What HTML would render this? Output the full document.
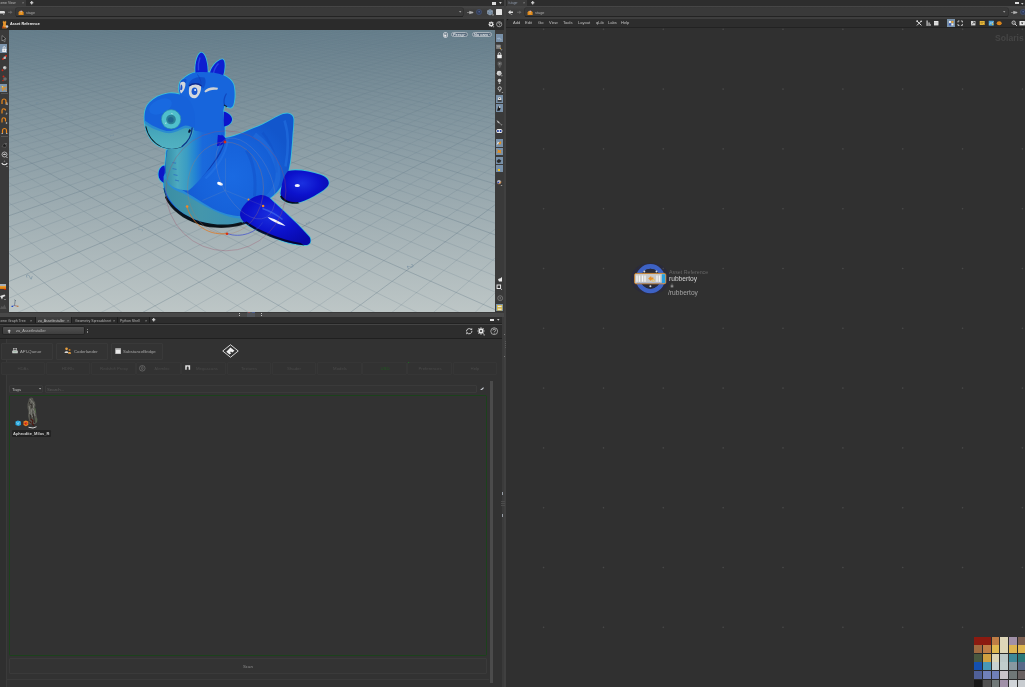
<!DOCTYPE html>
<html><head><meta charset="utf-8"><title>Houdini</title>
<style>
html,body{margin:0;padding:0;}
body{width:1025px;height:687px;overflow:hidden;background:#303030;position:relative;font-family:"Liberation Sans",sans-serif;color:#ccc;}
.a{position:absolute;}
.t{position:absolute;white-space:nowrap;line-height:1;will-change:transform;transform:scale(.1);transform-origin:0 0;}
svg{position:absolute;overflow:visible;}
</style></head><body>
<!-- divider -->
<div class="a" style="left:501.600px;top:0;width:2px;height:687px;background:#3b3b3b"></div><div class="a" style="left:503.500px;top:0;width:0.800px;height:687px;background:#353535"></div>
<div class="a" style="left:504.3px;top:0;width:1.8px;height:687px;background:#404040"></div>
<!-- ===== LEFT TOP PANE ===== -->
<div class="a" style="left:0;top:0;width:503.8px;height:5.5px;background:#2d2d2d"></div>
<div class="a" style="left:0;top:0;width:26px;height:5.8px;background:#3c3c3c"></div>
<div class="a" style="left:0;top:5.5px;width:503.8px;height:13px;background:linear-gradient(#474747,#3c3c3c 35%,#3b3b3b)"></div>
<div class="a" style="left:16px;top:8.2px;width:447px;height:7.4px;background:#393939;border-radius:1px;box-shadow:0 1.2px 0 #232323,0 -0.6px 0 #2c2c2c,-0.6px 0 0 #2c2c2c,0.6px 0 0 #2c2c2c"></div>
<div class="a" style="left:0;top:17.2px;width:503.8px;height:1.8px;background:#3e3e3e"></div>
<div class="a" style="left:0;top:19px;width:503.8px;height:10.6px;background:#2b2b2b"></div>
<!-- left toolbar -->
<div class="a" style="left:0;top:29.5px;width:8.6px;height:283px;background:#3a3a3a"></div>
<!-- right toolbar -->
<div class="a" style="left:494.6px;top:29.5px;width:9.2px;height:283px;background:#3a3a3a"></div>
<!-- viewport -->
<div class="a" id="vp" style="left:8.5px;top:29.5px;width:486.2px;height:282.5px;overflow:hidden;background:linear-gradient(#677f8c,#92a3aa 50%,#bdc6c6)">
<svg width="486.2" height="282.5" viewBox="0 0 486.2 282.5" style="left:0;top:0">
<defs><linearGradient id="gFade" x1="0" y1="0" x2="0" y2="1"><stop offset="0" stop-color="#fff" stop-opacity="0.3"/><stop offset="0.35" stop-color="#fff" stop-opacity="0.6"/><stop offset="0.7" stop-color="#fff" stop-opacity="1"/></linearGradient>
<mask id="mFade" maskUnits="userSpaceOnUse" x="0" y="0" width="487" height="283"><rect x="0" y="0" width="487" height="283" fill="url(#gFade)"/></mask></defs>
<g mask="url(#mFade)">
<path d="M482.9 0.0L486.5 0.5M470.8 0.0L486.5 2.0M15.4 0.0L0.0 2.1M446.5 0.0L486.5 5.3M27.4 0.0L0.0 3.7M434.4 0.0L486.5 7.1M39.3 0.0L0.0 5.4M422.3 0.0L486.5 8.8M51.3 0.0L0.0 7.1M410.2 0.0L486.5 10.7M75.2 0.0L0.0 10.7M385.9 0.0L486.5 14.5M87.1 0.0L0.0 12.6M373.8 0.0L486.5 16.5M99.1 0.0L0.0 14.6M361.7 0.0L486.5 18.5M111.0 0.0L0.0 16.6M349.5 0.0L486.5 20.7M135.0 0.0L0.0 20.8M325.3 0.0L486.5 25.1M146.9 0.0L0.0 23.1M313.2 0.0L486.5 27.5M158.9 0.0L0.0 25.3M301.0 0.0L486.5 29.9M170.8 0.0L0.0 27.7M288.9 0.0L486.5 32.4M194.7 0.0L0.0 32.7M264.7 0.0L486.5 37.7M206.7 0.0L0.0 35.3M252.6 0.0L486.5 40.5M218.6 0.0L0.0 38.1M240.4 0.0L486.5 43.4M230.6 0.0L0.0 40.9M228.3 0.0L486.5 46.4M254.5 0.0L0.0 46.9M204.1 0.0L486.5 52.8M266.4 0.0L0.0 50.0M191.9 0.0L486.5 56.2M278.4 0.0L0.0 53.3M179.8 0.0L486.5 59.7M290.3 0.0L0.0 56.8M167.7 0.0L486.5 63.4M314.2 0.0L0.0 64.1M143.4 0.0L486.5 71.2M326.2 0.0L0.0 67.9M131.3 0.0L486.5 75.4M338.1 0.0L0.0 72.0M119.2 0.0L486.5 79.8M350.1 0.0L0.0 76.2M107.1 0.0L486.5 84.3M374.0 0.0L0.0 85.4M82.8 0.0L486.5 94.2M385.9 0.0L0.0 90.2M70.7 0.0L486.5 99.5M397.9 0.0L0.0 95.4M58.6 0.0L486.5 105.1M409.9 0.0L0.0 100.8M46.5 0.0L486.5 110.9M433.8 0.0L0.0 112.4M22.2 0.0L486.5 123.7M445.7 0.0L0.0 118.8M10.1 0.0L486.5 130.6M457.7 0.0L0.0 125.4M0.0 0.6L486.5 137.9M469.6 0.0L0.0 132.5M0.0 4.1L486.5 145.7M486.5 2.1L0.0 148.0M0.0 11.9L486.5 162.9M486.5 5.9L0.0 156.5M-0.0 16.2L486.5 172.3M486.5 9.9L0.0 165.6M0.0 20.8L486.5 182.4M486.5 14.2L-0.0 175.3M0.0 25.8L486.5 193.3M486.5 23.8L0.0 196.9M0.0 36.8L486.5 217.6M486.5 29.1L0.0 209.0M0.0 43.0L486.5 231.2M486.5 34.9L0.0 222.0M0.0 49.7L486.5 246.0M486.5 41.1L0.0 236.1M0.0 57.1L486.5 262.2M486.5 55.4L0.0 268.2M0.0 73.9L451.5 283.0M486.5 63.5L7.7 283.0M0.0 83.7L409.3 283.0M486.5 72.5L49.4 283.0M0.0 94.4L367.1 283.0M486.5 82.4L91.0 283.0M0.0 106.5L324.9 283.0M486.5 105.7L174.2 283.0M0.0 135.3L240.5 283.0M486.5 119.6L215.8 283.0M0.0 152.7L198.3 283.0M486.5 135.4L257.4 283.0M0.0 172.7L156.1 283.0M486.5 153.5L299.0 283.0M0.0 196.0L113.9 283.0M486.5 198.8L382.2 283.0M0.0 256.1L29.5 283.0M486.5 227.7L423.9 283.0M486.5 262.5L465.5 283.0" stroke="#4a6478" stroke-width="0.5" opacity="0.31" fill="none"/>
<path d="M3.5 0.0L0.0 0.5M458.7 0.0L486.5 3.7M63.2 0.0L0.0 8.9M398.0 0.0L486.5 12.5M123.0 0.0L0.0 18.7M337.4 0.0L486.5 22.9M182.8 0.0L0.0 30.2M276.8 0.0L486.5 35.0M242.5 0.0L0.0 43.8M216.2 0.0L486.5 49.6M302.3 0.0L0.0 60.3M155.6 0.0L486.5 67.2M362.0 0.0L0.0 80.7M95.0 0.0L486.5 89.2M421.8 0.0L0.0 106.4M34.3 0.0L486.5 117.1M481.6 0.0L0.0 140.0M0.0 7.9L486.5 154.0M486.5 18.8L0.0 185.7M0.0 31.1L486.5 205.0M486.5 47.9L0.0 251.4M0.0 65.1L486.5 279.8M486.5 93.4L132.6 283.0M0.0 120.0L282.7 283.0M486.5 174.4L340.6 283.0M-0.0 223.4L71.7 283.0" stroke="#4a6478" stroke-width="0.6" opacity="0.47" fill="none"/>
</g>
<g font-family="Liberation Sans, sans-serif" font-size="9" fill="#6f8a9e" opacity="0.75">
<text transform="translate(23 248) rotate(-68) scale(0.8 1)" text-anchor="middle">2</text>
<text transform="translate(133.500 200.500) rotate(-68) scale(0.75 0.9)" text-anchor="middle" font-size="7">1</text>
<text transform="translate(297 193.500) rotate(68) scale(0.75 0.9)" text-anchor="middle" font-size="7">1</text>
<text transform="translate(398.500 237.500) rotate(68) scale(0.8 1)" text-anchor="middle">2</text>
<text transform="translate(385.500 91) rotate(-68) scale(0.8 1)" text-anchor="middle" font-size="5">3</text>
<text transform="translate(339.500 111) rotate(-68) scale(0.8 1)" text-anchor="middle" font-size="5.8">2</text>
<text transform="translate(456.500 59.500) rotate(-68) scale(0.8 1)" text-anchor="middle" font-size="4">5</text>
<text transform="translate(422.500 73.500) rotate(-68) scale(0.8 1)" text-anchor="middle" font-size="4.4">4</text>
<text transform="translate(101.500 106) rotate(68) scale(0.8 1)" text-anchor="middle" font-size="5.4">2</text>
<text transform="translate(26.500 73.500) rotate(68) scale(0.8 1)" text-anchor="middle" font-size="4.4">4</text>
<text transform="translate(60.500 88.500) rotate(68) scale(0.8 1)" text-anchor="middle" font-size="4.8">3</text>
</g>
<g transform="translate(-8.5 -29.5)">
<defs>
<radialGradient id="gBody" gradientUnits="userSpaceOnUse" cx="232" cy="176" r="62"><stop offset="0" stop-color="#1a6ae2"/><stop offset="0.55" stop-color="#1662da"/><stop offset="1" stop-color="#1256cc"/></radialGradient>
<radialGradient id="gFlip" cx="0.45" cy="0.4" r="0.7"><stop offset="0" stop-color="#1a30e0"/><stop offset="0.5" stop-color="#0c12cc"/><stop offset="1" stop-color="#0808a8"/></radialGradient>
<linearGradient id="gBelly" x1="0" y1="0" x2="1" y2="0"><stop offset="0" stop-color="#3a8ea4"/><stop offset="0.45" stop-color="#4496ac"/><stop offset="1" stop-color="#3a90b4"/></linearGradient>
<linearGradient id="gNeck" x1="0" y1="0" x2="1" y2="0"><stop offset="0" stop-color="#368ca6"/><stop offset="0.2" stop-color="#4caac0"/><stop offset="0.36" stop-color="#3a9cc4"/><stop offset="0.5" stop-color="#2384d4"/><stop offset="0.62" stop-color="#1a6adc"/><stop offset="1" stop-color="#1762d8"/></linearGradient>
<linearGradient id="gSnout" x1="0" y1="0" x2="0" y2="1"><stop offset="0" stop-color="#1668dc"/><stop offset="0.5" stop-color="#1a70dc"/><stop offset="0.62" stop-color="#3a9cd0"/><stop offset="1" stop-color="#56bcd0"/></linearGradient>
<linearGradient id="gTeal" x1="0" y1="0" x2="0" y2="1"><stop offset="0" stop-color="#3a98b6"/><stop offset="0.5" stop-color="#4aaabc"/><stop offset="1" stop-color="#54b4c4"/></linearGradient>
</defs>
<g stroke-linejoin="round">
<!-- silhouette outline (selection cyan) -->
<g id="sil" fill="none" stroke="#38c4dc" stroke-width="1.6">
<path d="M164 165 C159 166 157 172 158.5 177 C160 181 163 183 166 182 Z"/><path d="M221 112 C219 122 220 131 224 137.500 C230 137 237 134.500 243 132 C250 129 256 126.500 262 124 C268 121 273 118 278.500 115.300 C282 113.300 285 112.600 287.500 113 C291 113.600 293 115.500 293 119 C293 124 292.600 128 292.200 132 C291.800 138 291.500 143 291 148 C290.500 154 290 160 289 165 C288 172 285 180 280 187 C276 193 270 198 262 202 C256 210 248 219 240 222 C228 226.5 212 226.5 200 223 C186 219 174 210 168 200 C164 193 162.5 186 163.5 178 L166 150 Z"/><path d="M280 193 C281 184 283 175 287.500 170.500 C296 168.500 310 171 320 174.300 C325 176 328.500 179 328.300 183 C328 187 320 192 313.600 195.400 C307 199 301 201.500 296.600 202.300 C290 203 284 201 281 198 Z"/><path d="M240 211 C243 203 252 195.5 260 194.5 C266 194 270 198 274 202 C286 213 300 226 309 236.5 C311 240 310 244 306 244.5 C296 245 282 241 270 235.5 C258 230.5 246 225 242 220 C239.5 217 239 214 240 211 Z"/><path d="M195.200 73.500 C193.800 66 196 54.500 200.500 52 C204.500 52 207.500 62 207.200 73.500 Z"/><path d="M209.300 73.500 C210 67 216.500 59.500 222 58.800 C225 59.500 224.800 69 222.300 76 Z"/><path d="M179 92 C177.5 87 179 81.5 181.5 79.5 C186 75 191 72.5 196 71.8 C206 71 216 72 222.5 74.5 C228 77 231.5 80 233 84 C234.5 90 234.5 97 233.5 101.5 C233 105.5 231.5 107.5 229.5 107.2 C227 107 225.5 105.5 224 105 C223 108 222.5 112 222 116 L221 135 L194 130 L180 100 Z"/><path d="M167 93 C172 92 180 93 186 97 C192 102 195 112 194.5 122 C194 132 190 140 184 145 C178 149 168 149.5 160 146 C152 142.5 146 134 144.5 124 C143 113 145 106 149 102 C154 97 160 94 167 93 Z"/><path d="M223 111 C228 112 232 116 231.5 119.5 C231 123 227 125.5 223.5 126 Z"/><path d="M217.5 133 C222 134 225.5 137 225 140 C224 143.5 220 145.5 216.5 145.5 Z"/><path d="M168 146 C165 156 164.5 168 166 178 C168 186 178 190 188 190 C198 182 212 166 222 146 C226 136 224 120 222 110 L190 126 Z"/>
</g>
<!-- rear-left flipper peek -->
<path id="pFlipL" d="M164 165 C159 166 157 172 158.5 177 C160 181 163 183 166 182 Z" fill="#0c14c8"/>
<!-- ground shadow -->
<path d="M163 188 C166 204 180 218 205 226 C222 229 238 227 248 222 L246 219 C230 224 200 222 180 208 C170 200 166 192 165 186 Z" fill="#0a1018" opacity="0.85"/>
<!-- body incl. tail fin -->
<path id="pBody" d="M221 112 C219 122 220 131 224 137.500 C230 137 237 134.500 243 132 C250 129 256 126.500 262 124 C268 121 273 118 278.500 115.300 C282 113.300 285 112.600 287.500 113 C291 113.600 293 115.500 293 119 C293 124 292.600 128 292.200 132 C291.800 138 291.500 143 291 148 C290.500 154 290 160 289 165 C288 172 285 180 280 187 C276 193 270 198 262 202 C256 210 248 219 240 222 C228 226.5 212 226.5 200 223 C186 219 174 210 168 200 C164 193 162.5 186 163.5 178 L166 150 Z" fill="url(#gBody)"/>
<!-- belly cyan -->
<path d="M163 176 C163 190 168 201 180 211 C192 220 212 227 232 225 C240 224 246 221 250 214 C240 218 224 214 212 208 C200 201 186 192 176 186 C170 182 166 178 165 172 Z" fill="#2a8cd4"/>
<path d="M163.200 180 C164 192 170 202 180 210.500 C194 221 214 226.500 232 224.500 C238 223.800 243 221.500 246 218 C236 219 224 215.500 214 210.500 C202 205 190 197 182 192.500 C174 190 167 186 165 178 Z" fill="url(#gBelly)"/>
<path d="M165.500 195 C171 206 184 216 200 221 C214 225 230 225 241 221.500 L242 223.500 C230 227.600 212 227.600 199 224 C183 219.500 170 209 164.500 197 Z" fill="#080c10" opacity="0.920"/>
<!-- body shading -->
<path d="M246 150 C252 160 256 176 254 196" fill="none" stroke="#0f48c0" stroke-width="3" opacity="0.350"/>
<path d="M262 132 C270 142 276 156 276 172" fill="none" stroke="#0f48c0" stroke-width="2.500" opacity="0.300"/>
<path d="M284 120 C288 132 288 150 285 166" fill="none" stroke="#2a7cec" stroke-width="2.500" opacity="0.400"/>
<path d="M224 138 C222 150 213 164 201 175 C197 179 192 184 188 188" fill="none" stroke="#0c34a8" stroke-width="2.400" opacity="0.850"/><path d="M227 140 C226 152 217 167 205 178" fill="none" stroke="#2a7ae8" stroke-width="2" opacity="0.450"/>
<path d="M254 134 C262 140 272 150 276 164 C280 176 276 190 266 198" fill="none" stroke="#2a7ae4" stroke-width="5" opacity="0.35"/>
<ellipse cx="219.5" cy="183.2" rx="3" ry="1.6" fill="#fff" transform="rotate(20 219.5 183.2)"/>
<!-- rear right flipper -->
<path id="pFlipR" d="M280 193 C281 184 283 175 287.500 170.500 C296 168.500 310 171 320 174.300 C325 176 328.500 179 328.300 183 C328 187 320 192 313.600 195.400 C307 199 301 201.500 296.600 202.300 C290 203 284 201 281 198 Z" fill="url(#gFlip)"/>
<path d="M279.500 196 C283 202 291 204.500 299 202.800 L297 201.500 C291 202.500 284 200 281 195 Z" fill="#08080c" opacity="0.900"/>
<ellipse cx="296.8" cy="185" rx="2.6" ry="1.6" fill="#fff" opacity="0.95"/>
<!-- neck -->
<path id="pNeck" d="M168 146 C165 156 164.5 168 166 178 C168 186 178 190 188 190 C198 182 212 166 222 146 C226 136 224 120 222 110 L190 126 Z" fill="url(#gNeck)"/>
<path d="M172 168 l4 1 M173 174 l4 1 M174.5 179.5 l4 1 M172 162 l3.5 0.8" stroke="#2a6ac0" stroke-width="1.1" opacity="0.7" fill="none"/>
<!-- front flipper -->
<path id="pFlipF" d="M240 211 C243 203 252 195.5 260 194.5 C266 194 270 198 274 202 C286 213 300 226 309 236.5 C311 240 310 244 306 244.5 C296 245 282 241 270 235.5 C258 230.5 246 225 242 220 C239.5 217 239 214 240 211 Z" fill="url(#gFlip)"/>
<path d="M244 222 C256 232 280 242 304 245 L300 242.5 C280 239 258 230 246 221 Z" fill="#06061a" opacity="0.85"/>
<path d="M267 216.5 C272 217.5 280 221 285 225.5 C280 224.5 271 221 267 216.5 Z" fill="#fff" opacity="0.95"/>
<path d="M262 208 C268 210 276 214 282 219" stroke="#4a7cf0" stroke-width="1.6" opacity="0.55" fill="none"/>
<!-- neck spikes -->
<path id="pSp1" d="M223 111 C228 112 232 116 231.5 119.5 C231 123 227 125.5 223.5 126 Z" fill="#0c14cc"/>
<path id="pSp2" d="M217.5 133 C222 134 225.5 137 225 140 C224 143.5 220 145.5 216.5 145.5 Z" fill="#0c14cc"/>
<!-- horns -->
<path id="pHornL" d="M195.200 73.500 C193.800 66 196 54.500 200.500 52 C204.500 52 207.500 62 207.200 73.500 Z" fill="#0e1ed0"/>
<path id="pHornR" d="M209.300 73.500 C210 67 216.500 59.500 222 58.800 C225 59.500 224.800 69 222.300 76 Z" fill="#0e1ed0"/>
<path d="M199.5 57 C198 61 197.5 66 198 70" stroke="#3a5cf0" stroke-width="1.4" opacity="0.6" fill="none"/>
<path d="M218 63 C215 66 213.5 70 213 73" stroke="#3a5cf0" stroke-width="1.4" opacity="0.6" fill="none"/>
<!-- head -->
<path id="pHead" d="M179 92 C177.5 87 179 81.5 181.5 79.5 C186 75 191 72.5 196 71.8 C206 71 216 72 222.5 74.5 C228 77 231.5 80 233 84 C234.5 90 234.5 97 233.5 101.5 C233 105.5 231.5 107.5 229.5 107.2 C227 107 225.5 105.5 224 105 C223 108 222.5 112 222 116 L221 135 L194 130 L180 100 Z" fill="#1765dc"/>
<path d="M224 105 C223 101 224 96 226 93" stroke="#0e3ab0" stroke-width="1.2" fill="none" opacity="0.7"/>
<path d="M223.5 104.5 l3 1.8" stroke="#101010" stroke-width="1.2" opacity="0.8"/>
<!-- snout -->
<clipPath id="cSn"><path d="M167 93 C172 92 180 93 186 97 C192 102 195 112 194.5 122 C194 132 190 140 184 145 C178 149 168 149.5 160 146 C152 142.5 146 134 144.5 124 C143 113 145 106 149 102 C154 97 160 94 167 93 Z"/></clipPath>
<path id="pSnout" d="M167 93 C172 92 180 93 186 97 C192 102 195 112 194.5 122 C194 132 190 140 184 145 C178 149 168 149.5 160 146 C152 142.5 146 134 144.5 124 C143 113 145 106 149 102 C154 97 160 94 167 93 Z" fill="#1662da"/>
<g clip-path="url(#cSn)">
<path d="M140 116 C148 124 156 127.500 166 130.500 C174 131.500 180 126 185 125 C189 125 192 127 196 129 L196 152 L140 152 Z" fill="#2a8cd0"/>
<path d="M140 119 C148 127 156 130 166 132.500 C174 133.500 180 128.500 185 127.500 C189 127.500 192 129 196 131 L196 152 L140 152 Z" fill="url(#gTeal)"/>
<ellipse cx="160" cy="106" rx="12" ry="7" fill="#1a6ee4" opacity="0.600" transform="rotate(-25 160 106)"/>
<path d="M145 126 C147 136 153 143 161 147 C168 150 176 149.500 182 147" fill="none" stroke="#06090c" stroke-width="1.500" opacity="0.900"/>
</g>
<!-- mouth -->
<path d="M191.600 127.500 C191.400 134 188 141 181.500 146" fill="none" stroke="#0c3488" stroke-width="1.300" stroke-linecap="round"/>
<ellipse cx="189" cy="130.600" rx="1.100" ry="1.900" fill="#081430" transform="rotate(25 189 130.600)"/>
<!-- nostril ring -->
<circle cx="170.600" cy="118.800" r="9.700" fill="#50c0cc"/>
<circle cx="170.600" cy="118.800" r="9.700" fill="none" stroke="#2a88a8" stroke-width="0.700"/>
<circle cx="170.500" cy="119" r="4.800" fill="#2c8098"/>
<circle cx="170.300" cy="119.200" r="2.800" fill="#1f6690"/>
<path d="M165.200 123.500 l0.300 -1.500 M171 112.500 l1 1.200" stroke="#fff" stroke-width="0.700" opacity="0.850"/>
<!-- eyes -->
<path d="M188 84 C190 78 197 75 204 77 C206 80 205 85 203 88 C199 84 193 83 188 86 Z" fill="#0f48c4" opacity="0.750"/>
<path d="M179.500 82 C181 79 184 78 186 79 L185.500 83 C183.500 81 181 81.500 180 83 Z" fill="#0f48c4" opacity="0.700"/>
<path d="M180 82 C182 80.5 184.5 81 185 83 C185 87 183 91.5 180.5 93 C179 91 179 85 180 82 Z" fill="#d4d8dc"/>
<path d="M180.3 84 C181.5 84 182.3 86 181.8 88.5 C181 90 180 90 179.6 89 Z" fill="#1a50c8"/>
<path d="M189 86 C191 83 197 82.5 200.5 85.5 C201 90 199 95 195.5 97.5 C192 98.5 189 96.5 188.5 93 C188.2 90.5 188.4 88 189 86 Z" fill="#d4d8dc"/>
<ellipse cx="194" cy="90.8" rx="2.9" ry="3.8" fill="#1a58d0"/>
<circle cx="194.6" cy="89.6" r="1" fill="#e8f0ff"/>
<path d="M188.6 85.5 C192 82.5 198 82.5 201 85.5" stroke="#0e2a90" stroke-width="1.3" fill="none"/>
<path d="M203.800 90.800 C206.500 87 212 85.800 217.300 87.200 C217.600 88.300 217 89.200 216 89.300 C212 88.800 208 90 205 92 Z" fill="#cdd1d5"/>
<path d="M197 74 C199 77 200.5 80 200.5 83" stroke="#0f3cb8" stroke-width="1" fill="none" opacity="0.6"/>
</g>
<!-- gizmo -->
<g fill="none" stroke-width="0.45">
<circle cx="225.4" cy="190.3" r="60" stroke="#a05068" opacity="0.75"/>
<ellipse cx="225" cy="187.5" rx="38" ry="46" stroke="#b07860" opacity="0.7"/>
<ellipse cx="245" cy="178" rx="24" ry="44" stroke="#9090b0" opacity="0.5" transform="rotate(-28 245 178)"/>
<path d="M186.5 206 C190 220 205 236 226.5 233" stroke="#e07820" stroke-width="0.8" opacity="0.95"/>
<path d="M226.5 233 C240 238 256 232 262 222" stroke="#3040d0" stroke-width="0.7" opacity="0.9"/>
<path d="M225 190 L225 158 M225 190 L202 200 M225 190 L262 205" stroke="#c0b090" stroke-width="0.4" opacity="0.35"/>
</g>
<circle cx="224.5" cy="141.5" r="1.4" fill="#d83010"/>
<circle cx="226.5" cy="233.2" r="1.3" fill="#d83010"/>
<circle cx="186.6" cy="206" r="1.3" fill="#f08828"/>
<circle cx="262.6" cy="205.5" r="1.3" fill="#f08828"/>
<circle cx="248" cy="199" r="1" fill="#e09040"/>

</g>
</svg>
</div>
<!-- top-left texts/icons -->
<div class="t" style="left:-3.2px;top:1.2px;font-size:35px;color:#bbb">Scene View</div>
<div class="t" style="left:21.8px;top:1.1px;font-size:36px;color:#aaa">×</div>
<svg style="left:29.5px;top:1.2px" width="3.4" height="3.4" viewBox="0 0 10 10"><path d="M5 0v10M0 5h10" stroke="#ccc" stroke-width="3"/><circle cx="5" cy="5" r="3.2" fill="#ccc"/></svg>
<div class="a" style="left:492px;top:1.800px;width:4.200px;height:3px;background:#dcdcdc"></div>
<svg style="left:499px;top:2.300px" width="2.800" height="1.900" viewBox="0 0 10 7"><path d="M0 0h10L5 7z" fill="#ccc"/></svg>
<!-- path bar -->
<svg style="left:-0.5px;top:10.2px" width="5" height="5" viewBox="0 0 10 10"><path d="M0 2h7c2 0 3 1 3 3s-1 2-3 2H0z" fill="#ddd"/><path d="M6 8l3 0-1.5 2z" fill="#bbb"/></svg>
<svg style="left:8px;top:9.5px" width="4.5" height="4.5" viewBox="0 0 10 10"><path d="M0 4h5V1l5 4-5 4V6H0z" fill="#666"/></svg>
<svg style="left:17.8px;top:9.8px" width="6.2" height="5.6" viewBox="0 0 12 11"><path d="M1 5l2-3h6l2 3v5H1z" fill="#e08a1c"/><path d="M3.5 5.5l2.5 2 2.5-2z" fill="#f6c060"/><circle cx="6.3" cy="2.6" r="1.6" fill="#b8c0d0"/><circle cx="6.3" cy="1.6" r="0.9" fill="#c03020"/></svg>
<div class="t" style="left:26px;top:10.7px;font-size:36.5px;color:#aaa">stage</div>
<svg style="left:458.5px;top:10.8px" width="2.4" height="1.8" viewBox="0 0 10 7"><path d="M0 0h10L5 7z" fill="#999"/></svg>
<svg style="left:467px;top:9.5px" width="6" height="5" viewBox="0 0 12 10"><path d="M0 5h5M5 2.500l4 1v3l-4 1zM9 4h3v2H9z" stroke="#b4b4b4" stroke-width="1.100" fill="#b4b4b4"/></svg>

<svg style="left:475.5px;top:9.2px" width="6" height="6" viewBox="0 0 12 12"><circle cx="6" cy="6" r="5.200" fill="#323d58" stroke="#4c5c82" stroke-width="1"/><circle cx="6.300" cy="5.500" r="1.600" fill="#5468a0"/></svg>
<svg style="left:487px;top:9px" width="7" height="7" viewBox="0 0 14 14"><path d="M6 1l5 2.500v6L6 12 1 9.500v-6z" fill="#6a8098" stroke="#a8b8c8" stroke-width="1"/><path d="M6 6.500L1 3.500M6 6.500l5-3M6 6.500V12" stroke="#c0ccd8" stroke-width="0.800"/><path d="M10 11h4l-2 2.500z" fill="#ccc"/></svg>
<div class="a" style="left:496.4px;top:9.4px;width:5.2px;height:5.4px;background:#e4e4e4;border-radius:0.6px"></div>
<!-- op bar -->
<svg style="left:0.6px;top:19.6px" width="7.5" height="8.5" viewBox="0 0 15 17"><path d="M4 1l1.500 2h3L10 1l0.500 4-1 3 2 6H3l1.500-6-1-3z" fill="#e8952c"/><path d="M3 14h8l1 3H2z" fill="#b86818"/><circle cx="12" cy="13" r="2.500" fill="#c8ccd8"/><circle cx="4" cy="14.500" r="1.400" fill="#c02818"/></svg>
<div class="t" style="left:9.8px;top:21.9px;font-size:38px;font-weight:bold;color:#f0f0f0">Asset Reference</div>
<svg style="left:487.5px;top:21px" width="6.4" height="6.4" viewBox="0 0 16 16"><g stroke="#e0e0e0" stroke-width="2.6"><path d="M8 1v14M1 8h14M3 3l10 10M13 3L3 13"/></g><circle cx="8" cy="8" r="4.600" fill="#e0e0e0"/><circle cx="8" cy="8" r="2.200" fill="#2b2b2b"/><path d="M12 14h4l-2 2z" fill="#ccc"/></svg>
<svg style="left:496px;top:20.800px" width="6.4" height="6.4" viewBox="0 0 16 16"><circle cx="8" cy="8" r="6.500" fill="none" stroke="#d8d8d8" stroke-width="1.500"/><path d="M5.500 6.500c0-3.500 5-3.500 5 0 0 1.800-2.500 1.800-2.500 3.500" fill="none" stroke="#d8d8d8" stroke-width="1.600"/><circle cx="8" cy="12" r="1" fill="#d8d8d8"/></svg>
<!-- viewport pills -->
<div class="a" style="left:443px;top:32.200px;width:4.800px;height:5.600px;box-sizing:border-box;border:0.500px solid #b8c0c8;border-radius:2px;background:#5a6c7c"></div>
<svg style="left:444.100px;top:32.900px" width="2.600" height="4" viewBox="0 0 6 9"><rect x="0.500" y="4" width="5" height="4.500" fill="#eee"/><path d="M1.500 4V2.500a1.500 1.500 0 0 1 3 0V4" fill="none" stroke="#eee" stroke-width="1.100"/></svg>
<div class="a" style="left:450.800px;top:32.400px;width:17.200px;height:5px;box-sizing:border-box;border:0.500px solid #a8b2ba;border-radius:2.500px;background:#5a6c7e"></div>
<div class="t" style="left:453px;top:33.100px;font-size:39px;color:#dde2e6;font-weight:bold">Persp</div>
<svg style="left:464.400px;top:34.400px" width="1.600" height="1.100" viewBox="0 0 10 7"><path d="M0 0h10L5 7z" fill="#ccc"/></svg>
<div class="a" style="left:471.600px;top:32.400px;width:20.300px;height:5px;box-sizing:border-box;border:0.500px solid #a8b2ba;border-radius:2.500px;background:#5a6c7e"></div>
<div class="t" style="left:473.800px;top:33.100px;font-size:39px;color:#dde2e6;font-weight:bold">No cam</div>
<svg style="left:488.600px;top:34.400px" width="1.600" height="1.100" viewBox="0 0 10 7"><path d="M0 0h10L5 7z" fill="#ccc"/></svg>
<!-- axis gnomon -->
<svg style="left:11px;top:299px" width="9" height="9" viewBox="0 0 18 18"><path d="M7 13l1.500-11" stroke="#506070" stroke-width="1.200"/><path d="M7 13l6 1.500" stroke="#a05040" stroke-width="1.200"/><path d="M7 13l-4 1.500" stroke="#3050b0" stroke-width="1.200"/><rect x="1" y="13.500" width="3" height="2.500" fill="#2048c8"/><rect x="12" y="13.500" width="3" height="2" fill="#c07030"/><path d="M7 1l2.500 3" stroke="#405060" stroke-width="1"/></svg>
<!-- left toolbar icons -->
<svg style="left:1.2px;top:34.5px" width="6" height="7" viewBox="0 0 12 14"><path d="M2 1l8 7-3.500 0.500 2 4-2 1-2-4L2 12z" fill="#1a1a1a" stroke="#bbb" stroke-width="1"/></svg>
<div class="a" style="left:0;top:44.4px;width:7.2px;height:8.8px;background:#7c94ac"></div>
<svg style="left:1.6px;top:45.6px" width="4.4" height="6.4" viewBox="0 0 9 13"><rect x="0.500" y="5.500" width="8" height="7" rx="1" fill="#f4f4f4"/><path d="M2.300 5.500V3.500a2.200 2.200 0 0 1 4.400 0V5.500" fill="none" stroke="#f4f4f4" stroke-width="1.500"/><rect x="3.700" y="7.500" width="1.600" height="3" fill="#7c94ac"/></svg>
<svg style="left:0.5px;top:54px" width="7" height="7" viewBox="0 0 14 14"><circle cx="4" cy="10" r="2.200" fill="#d02818"/><circle cx="10" cy="4" r="2.200" fill="#d02818"/><circle cx="7.500" cy="7.500" r="2.500" fill="#c8c8c8"/><path d="M4 10L10 4" stroke="#aaa" stroke-width="1"/></svg>
<svg style="left:0.5px;top:64.500px" width="7" height="7" viewBox="0 0 14 14"><circle cx="7.500" cy="5.500" r="3.600" fill="#b8b8b8"/><circle cx="3" cy="10.500" r="1.900" fill="#d02818"/><circle cx="6.500" cy="4.500" r="1.200" fill="#eee"/></svg>
<svg style="left:0.5px;top:74.500px" width="7" height="7" viewBox="0 0 14 14"><circle cx="8" cy="8" r="3.600" fill="#6a6a6a"/><circle cx="5" cy="3" r="1.900" fill="#d02818"/><circle cx="4" cy="11" r="1.500" fill="#d02818"/></svg>
<div class="a" style="left:0;top:83.700px;width:7.2px;height:8.800px;background:#7c94ac"></div>
<svg style="left:0.8px;top:85px" width="6" height="6.500" viewBox="0 0 12 13"><path d="M1 3l5 2 5-1M1 7l6 1 4 3M2 11l4-2" stroke="#e8901c" stroke-width="2" fill="none"/><circle cx="3" cy="3.500" r="1.500" fill="#f0d060"/></svg>
<div class="a" style="left:0.5px;top:93.400px;width:7px;height:0.600px;background:#555"></div>
<svg style="left:0.5px;top:97.500px" width="7" height="7.500" viewBox="0 0 14 15"><path d="M2 12V6a4 4 0 0 1 8 0v6" fill="none" stroke="#e8861c" stroke-width="2.400"/><path d="M11 8v5M13 9v4M9 13h5" stroke="#ccc" stroke-width="0.900"/></svg>
<svg style="left:0.5px;top:107.500px" width="7" height="7.500" viewBox="0 0 14 15"><path d="M2 11V5a3.500 3.500 0 0 1 7 0" fill="none" stroke="#e8861c" stroke-width="2.400"/><path d="M9 12l4-1M11 9v4" stroke="#ccc" stroke-width="0.900"/></svg>
<svg style="left:0.5px;top:117px" width="7" height="7.500" viewBox="0 0 14 15"><path d="M2 11V5a3.500 3.500 0 0 1 7 0v4" fill="none" stroke="#e8861c" stroke-width="2.400"/><circle cx="11" cy="12" r="1.600" fill="#ccc"/></svg>
<svg style="left:0.5px;top:126.500px" width="7" height="7.500" viewBox="0 0 14 15"><path d="M3 12V7a4 4 0 0 1 8 0v5" fill="none" stroke="#e8861c" stroke-width="2.400"/><path d="M1 13h3M10 13h3" stroke="#ddd" stroke-width="1.400"/></svg>
<div class="a" style="left:0.5px;top:136px;width:7px;height:0.600px;background:#555"></div>
<svg style="left:0.8px;top:141.500px" width="6.500" height="6.500" viewBox="0 0 13 13"><path d="M2 9l4-6 5 3-2 5z" fill="#1c1c1c" stroke="#777" stroke-width="1"/><circle cx="10" cy="3.500" r="1.300" fill="#888"/></svg>
<svg style="left:0.5px;top:150.500px" width="7" height="7.500" viewBox="0 0 14 15"><circle cx="7" cy="7" r="5" fill="none" stroke="#ccc" stroke-width="1.600"/><path d="M4 8a3 3 0 0 1 6 0z" fill="#ccc"/><path d="M10 12h4l-2 2z" fill="#bbb"/></svg>
<svg style="left:0.5px;top:160px" width="7" height="7.500" viewBox="0 0 14 15"><path d="M1.500 6a6 6 0 0 0 11 0" fill="none" stroke="#e8e8e8" stroke-width="2.200"/><path d="M5 3l2-2 2 2z" fill="#aaa"/><path d="M10 12h4l-2 2z" fill="#bbb"/></svg>
<!-- left toolbar bottom -->
<div class="a" style="left:0;top:283.900px;width:6px;height:2px;background:#a8b0b8"></div>
<div class="a" style="left:0;top:285.900px;width:6px;height:3.300px;background:linear-gradient(#f0a432,#d07010)"></div>
<div class="a" style="left:4.200px;top:288.800px;width:1.800px;height:1.100px;background:#b81808"></div>
<svg style="left:0;top:294px" width="6" height="6.500" viewBox="0 0 12 13"><path d="M0 4l9-3 2 3-5 2-2 5z" fill="#e0e0e0"/><path d="M8 10h4l-2 2z" fill="#bbb"/></svg>
<svg style="left:0;top:302.500px" width="6.500" height="6.500" viewBox="0 0 13 13"><path d="M0 12l3-6 3 2 3-5 4 9z" fill="#555"/></svg>
<!-- right toolbar icons -->
<div class="a" style="left:495.600px;top:33.900px;width:7.200px;height:7.900px;background:#7890a8"></div>
<svg style="left:496.400px;top:35px" width="5.600" height="5.600" viewBox="0 0 11 11"><path d="M1 7l5-2 4 2-5 2z" fill="#9ab0c8"/><path d="M8 9h3l-1.500 2z" fill="#ccc"/></svg>
<svg style="left:496px;top:43.500px" width="6.500" height="7" viewBox="0 0 13 14"><rect x="1" y="2" width="8" height="7" fill="#6a6a6a" stroke="#aaa" stroke-width="0.800"/><path d="M2 4h6M2 6h6" stroke="#ddd" stroke-width="0.900"/><path d="M9 11h4l-2 2z" fill="#bbb"/><circle cx="9" cy="9" r="1.400" fill="#d0a040"/></svg>
<svg style="left:496.700px;top:52px" width="5" height="6.600" viewBox="0 0 10 13"><rect x="0.500" y="5.500" width="9" height="7" rx="1" fill="#f0f0f0"/><path d="M2.500 5.500V3.600a2.500 2.500 0 0 1 5 0V5.500" fill="none" stroke="#f0f0f0" stroke-width="1.500"/></svg>
<svg style="left:496.500px;top:60.800px" width="5.400" height="6.800" viewBox="0 0 11 14"><rect x="2" y="2" width="7" height="7" rx="1.500" fill="#5a5a5a" stroke="#888" stroke-width="0.800"/><path d="M3 11h5M4 13h3" stroke="#777" stroke-width="1"/><circle cx="5.500" cy="5.500" r="1.600" fill="#999"/></svg>
<svg style="left:496px;top:69.500px" width="6.800" height="7" viewBox="0 0 14 14"><circle cx="6.500" cy="6.500" r="5" fill="#d8d8d8"/><circle cx="8" cy="8" r="3" fill="#bbb"/><path d="M10 11h4l-2 2z" fill="#bbb"/></svg>
<svg style="left:497px;top:77.500px" width="5" height="7" viewBox="0 0 10 14"><circle cx="5" cy="5" r="3.600" fill="#c8c8c8"/><rect x="3.500" y="8.500" width="3" height="3.500" fill="#aaa"/></svg>
<svg style="left:496.500px;top:86px" width="6.400" height="7.400" viewBox="0 0 13 15"><circle cx="5.500" cy="5" r="3.400" fill="none" stroke="#ddd" stroke-width="1.600"/><rect x="4" y="8.500" width="3" height="3" fill="#bbb"/><path d="M9 12h4l-2 2z" fill="#bbb"/></svg>
<div class="a" style="left:495.600px;top:94.800px;width:7.200px;height:8px;background:#7890a8"></div>
<svg style="left:496.600px;top:95.800px" width="5.200" height="6.200" viewBox="0 0 10 12"><path d="M2 5a3 3 0 0 1 6 0v3H2z" fill="#e0e0e0"/><rect x="1" y="8" width="8" height="3" fill="#333"/><circle cx="5" cy="4.500" r="1.300" fill="#555"/></svg>
<div class="a" style="left:495.600px;top:104.400px;width:7.200px;height:8px;background:#7890a8"></div>
<svg style="left:496.400px;top:105.400px" width="5.600" height="6.200" viewBox="0 0 11 12"><path d="M2 11l3-9 4 5-2 4z" fill="#1a1a1a"/><circle cx="7" cy="4" r="1.600" fill="#ddd"/></svg>
<svg style="left:496px;top:119px" width="7" height="7" viewBox="0 0 14 14"><path d="M1 2l7 5-4 1z" fill="#ccc"/><path d="M5 8l5 2" stroke="#aaa" stroke-width="1"/><path d="M9 11h4l-2 2z" fill="#bbb"/></svg>
<svg style="left:496px;top:128px" width="6.600" height="6" viewBox="0 0 13 12"><rect x="0.500" y="2" width="12" height="8" rx="3" fill="#e8e8e8"/><circle cx="3.800" cy="6" r="2" fill="#1838a0"/><circle cx="9.200" cy="6" r="2" fill="#1838a0"/></svg>
<div class="a" style="left:495.600px;top:138.900px;width:7.200px;height:7.800px;background:#7890a8"></div>
<svg style="left:496.400px;top:139.800px" width="5.800" height="6" viewBox="0 0 12 12"><path d="M1 10l3-7 3 3z" fill="#e8e8e8"/><path d="M5 7l5-5 1 4-3 4z" fill="#e8901c"/></svg>
<div class="a" style="left:495.600px;top:147.800px;width:7.200px;height:7px;background:#7890a8"></div>
<svg style="left:496.200px;top:148.300px" width="6.200" height="6" viewBox="0 0 12 12"><path d="M1 2l6 3 4-2-2 4 2 4-6-2-4 1 3-4z" fill="#e8901c"/></svg>
<div class="a" style="left:495.600px;top:156.600px;width:7.200px;height:7.300px;background:#7890a8"></div>
<svg style="left:496.400px;top:157.600px" width="5.800" height="5.600" viewBox="0 0 12 11"><path d="M1 6l5-4 5 3-2 4-5 1z" fill="#2a2a2a"/></svg>
<div class="a" style="left:495.600px;top:165px;width:7.200px;height:7.300px;background:#7890a8"></div>
<div class="a" style="left:498.200px;top:168.600px;width:2px;height:2px;background:#f0c020"></div>
<svg style="left:496px;top:179px" width="7" height="7.600" viewBox="0 0 14 15"><circle cx="6" cy="6" r="4" fill="#b8b8c0"/><path d="M3 8a4 4 0 0 0 7-3" stroke="#e08020" stroke-width="1.600" fill="none"/><circle cx="4.500" cy="7" r="1.800" fill="#2848b0"/><path d="M9 12h4l-2 2z" fill="#bbb"/></svg>
<!-- right toolbar bottom -->
<svg style="left:496.500px;top:275.500px" width="6" height="6" viewBox="0 0 12 12"><path d="M2 7l3-3v2l5-4v9H4z" fill="#e8e8e8"/></svg>
<svg style="left:496.300px;top:284px" width="6.600" height="7" viewBox="0 0 13 14"><rect x="1" y="1" width="9" height="9" fill="#e8e8e8"/><rect x="3" y="3" width="5" height="5" fill="#333"/><path d="M8 8l4 4" stroke="#ccc" stroke-width="1.600"/></svg>
<svg style="left:496.500px;top:295px" width="6.400" height="6.400" viewBox="0 0 13 13"><circle cx="6.500" cy="6.500" r="5" fill="none" stroke="#999" stroke-width="1.200"/><path d="M6.500 4v5" stroke="#999" stroke-width="1.400"/></svg>
<div class="a" style="left:495.900px;top:304px;width:7.100px;height:7.300px;background:#7890a8"></div>
<svg style="left:497px;top:305px" width="5.200" height="5.600" viewBox="0 0 10 11"><rect x="0.500" y="1" width="9" height="3.600" fill="#e8e8e8" stroke="#f0c020" stroke-width="1.200"/><rect x="0.500" y="6.400" width="9" height="3.600" fill="#e8e8e8" stroke="#f0c020" stroke-width="1.200"/></svg>
<!-- ===== LEFT BOTTOM PANE ===== -->
<div class="a" style="left:0;top:311.9px;width:504px;height:1.2px;background:#3a3a3a"></div>
<div class="a" style="left:0;top:313px;width:504px;height:3.8px;background:#484848"></div>
<div class="a" style="left:0;top:316.8px;width:501.600px;height:6.5px;background:#2d2d2d"></div>
<div class="a" style="left:0;top:323.2px;width:501.600px;height:0.9px;background:#222"></div>
<div class="a" style="left:0;top:324px;width:501.600px;height:1px;background:#444"></div>
<div class="a" style="left:0;top:325px;width:501.600px;height:12.8px;background:#2d2d2d"></div>
<div class="a" style="left:0;top:337.7px;width:501.600px;height:1.1px;background:#1f1f1f"></div>
<div class="a" style="left:0;top:338.8px;width:501.600px;height:349px;background:#323232"></div>
<!-- drag handle -->
<div class="a" style="left:247.300px;top:312.300px;width:7.800px;height:4.300px;background:#50545a"></div>
<div class="a" style="left:248px;top:312.300px;width:1.600px;height:0.800px;background:#8a4a4a"></div>
<div class="a" style="left:251.500px;top:312.300px;width:3px;height:0.800px;background:#4a5a8a"></div>
<div class="a" style="left:239.100px;top:312.600px;width:1.100px;height:0.900px;background:#c0c0c0"></div>
<div class="a" style="left:239.100px;top:315px;width:1.100px;height:0.900px;background:#c0c0c0"></div>
<div class="a" style="left:261.200px;top:312.600px;width:1.100px;height:0.900px;background:#c0c0c0"></div>
<div class="a" style="left:261.200px;top:315px;width:1.100px;height:0.900px;background:#c0c0c0"></div>
<!-- tabs -->
<div class="a" style="left:0;top:317px;width:34.500px;height:6.300px;background:#2a2a2a;box-shadow:0.8px 0 0 #1a1a1a"></div>
<div class="a" style="left:35.500px;top:317px;width:35.500px;height:6.300px;background:#3e3e3e;box-shadow:0.8px 0 0 #1a1a1a"></div>
<div class="a" style="left:72.500px;top:317px;width:44.500px;height:6.300px;background:#2a2a2a;box-shadow:0.8px 0 0 #1a1a1a"></div>
<div class="a" style="left:118px;top:317px;width:31px;height:6.300px;background:#2a2a2a;box-shadow:0.8px 0 0 #1a1a1a"></div>
<div class="t" style="left:-2.600px;top:318.600px;font-size:35px;color:#b0b0b0">Scene Graph Tree</div>
<div class="t" style="left:30.400px;top:318.700px;font-size:36px;color:#bbb">×</div>
<div class="t" style="left:38px;top:318.600px;font-size:35px;color:#c8c8c8">zu_AssetInstaller</div>
<div class="t" style="left:67.200px;top:318.700px;font-size:36px;color:#bbb">×</div>
<div class="t" style="left:75.200px;top:318.600px;font-size:35px;color:#b0b0b0">Geometry Spreadsheet</div>
<div class="t" style="left:113.300px;top:318.700px;font-size:36px;color:#bbb">×</div>
<div class="t" style="left:120.400px;top:318.600px;font-size:35px;color:#b0b0b0">Python Shell</div>
<div class="t" style="left:144.800px;top:318.700px;font-size:36px;color:#bbb">×</div>
<svg style="left:152px;top:318.300px" width="3.400" height="3.400" viewBox="0 0 10 10"><path d="M5 0v10M0 5h10" stroke="#ccc" stroke-width="3"/><circle cx="5" cy="5" r="3.200" fill="#ccc"/></svg>
<div class="a" style="left:490.400px;top:318.600px;width:3.200px;height:2.400px;background:#ddd"></div>
<svg style="left:497px;top:319px" width="2.600" height="1.800" viewBox="0 0 10 7"><path d="M0 0h10L5 7z" fill="#ccc"/></svg>
<!-- toolbar row -->
<div class="a" style="left:3px;top:327.400px;width:81px;height:6.800px;background:linear-gradient(#505050,#3e3e3e);border-radius:1px;box-shadow:0 0 0 0.600px #1c1c1c"></div>
<svg style="left:6.600px;top:328.600px" width="4.400" height="4.800" viewBox="0 0 9 10"><path d="M1 4l3.500-3 3.500 3-3.500 2z" fill="#ccc"/><path d="M2.500 7h4l-2 2.500z" fill="#ddd"/></svg>
<div class="t" style="left:16px;top:329px;font-size:39px;color:#bbb">zu_AssetInstaller</div>
<div class="a" style="left:87.400px;top:328.600px;width:0.900px;height:4.200px;background:repeating-linear-gradient(#888 0 1px,transparent 1px 1.600px)"></div>
<svg style="left:465px;top:326.800px" width="8.400" height="8.400" viewBox="0 0 17 17"><path d="M3 9a5.500 5.500 0 0 1 9.500-4" fill="none" stroke="#ccc" stroke-width="2"/><path d="M14 8a5.500 5.500 0 0 1-9.500 4" fill="none" stroke="#ccc" stroke-width="2"/><path d="M10.500 5.500l4 1 0-4.500z" fill="#ccc"/><path d="M6.500 11.500l-4-1 0 4.500z" fill="#ccc"/></svg>
<svg style="left:477.200px;top:326.600px" width="9" height="9" viewBox="0 0 18 18"><g stroke="#e4e4e4" stroke-width="2.400"><path d="M8 1v14M1 8h14M3 3l10 10M13 3L3 13"/></g><circle cx="8" cy="8" r="4.400" fill="#e4e4e4"/><circle cx="8" cy="8" r="2" fill="#2d2d2d"/><path d="M12 15h4.500l-2.200 2.500z" fill="#ccc"/></svg>
<svg style="left:489.800px;top:326.800px" width="8.400" height="8.400" viewBox="0 0 16 16"><circle cx="8" cy="8" r="6.500" fill="none" stroke="#d0d0d0" stroke-width="1.300"/><path d="M5.500 6.500c0-3.500 5-3.500 5 0 0 1.800-2.500 1.800-2.500 3.500" fill="none" stroke="#d0d0d0" stroke-width="1.500"/><circle cx="8" cy="12" r="0.900" fill="#d0d0d0"/></svg>
<!-- left margin strip -->
<div class="a" style="left:0;top:339px;width:5.500px;height:348px;background:#2f2f2f"></div>
<div class="a" style="left:5.500px;top:339px;width:0.600px;height:348px;background:#3a3a3a"></div>
<!-- top buttons -->
<div class="a" style="left:1px;top:342.500px;width:52px;height:17px;border:0.500px solid #393939;box-sizing:border-box;border-radius:1px;background:#333"></div>
<div class="a" style="left:55.500px;top:342.500px;width:52px;height:17px;border:0.500px solid #393939;box-sizing:border-box;border-radius:1px;background:#333"></div>
<div class="a" style="left:110.500px;top:342.500px;width:52px;height:17px;border:0.500px solid #393939;box-sizing:border-box;border-radius:1px;background:#333"></div>
<svg style="left:12.200px;top:348px" width="6" height="6" viewBox="0 0 12 12"><rect x="2.500" y="1" width="7" height="4" fill="#555" stroke="#ccc" stroke-width="1"/><rect x="0.500" y="5" width="11" height="5.500" rx="1" fill="#d8d8d8"/><rect x="2.500" y="7" width="7" height="1.500" fill="#6a9a7a"/></svg>
<div class="t" style="left:20px;top:349.100px;font-size:43px;color:#a8a8a8">API-Queue</div>
<svg style="left:64px;top:347.400px" width="7.600" height="7.200" viewBox="0 0 15 14"><circle cx="5" cy="3.500" r="2.600" fill="#e8a040"/><path d="M1 12c0-5 8-5 8 0z" fill="#d8d8d8"/><circle cx="11" cy="6" r="2" fill="#c87820"/><path d="M8 13c0-4 6-4 6 0z" fill="#e8a040"/></svg>
<div class="t" style="left:73.600px;top:349.100px;font-size:43px;color:#a8a8a8">Coderlander</div>
<svg style="left:115.400px;top:347.800px" width="6.200" height="6.200" viewBox="0 0 12 12"><rect x="0.500" y="0.500" width="11" height="11" fill="#c8c8c8"/><rect x="2" y="3" width="8" height="7" fill="#e8e8e8"/><path d="M0.500 2.500h11" stroke="#888" stroke-width="1"/></svg>
<div class="t" style="left:123.200px;top:349.100px;font-size:43px;color:#a8a8a8">SubstanceBridge</div>
<!-- logo -->
<svg style="left:222px;top:344.400px" width="17" height="14" viewBox="0 0 34 28"><path d="M17 1.500L32.500 14 17 26.500 1.500 14z" fill="none" stroke="#e8e8e8" stroke-width="1.800"/><path d="M17 7l8 6.500-4.500 3.500-2.500-2-2 1.500 2.500 2L15 21l-6.500-5.500z" fill="#f0f0f0"/></svg>
<div class="a" style="left:0.6px;top:362px;width:44.6px;height:12.500px;border:0.500px solid #363636;box-sizing:border-box;border-radius:1px;background:#323232"></div>
<div class="t" style="left:23.2px;top:366.200px;width:0;display:flex;justify-content:center;font-size:43px;color:#4a4a4a"><span>HDAs</span></div>
<div class="a" style="left:45.8px;top:362px;width:44.6px;height:12.500px;border:0.500px solid #363636;box-sizing:border-box;border-radius:1px;background:#323232"></div>
<div class="t" style="left:68.4px;top:366.200px;width:0;display:flex;justify-content:center;font-size:43px;color:#4a4a4a"><span>HDRIs</span></div>
<div class="a" style="left:91.0px;top:362px;width:44.6px;height:12.500px;border:0.500px solid #363636;box-sizing:border-box;border-radius:1px;background:#323232"></div>
<div class="t" style="left:113.6px;top:366.200px;width:0;display:flex;justify-content:center;font-size:43px;color:#4a4a4a"><span>Redshift Proxy</span></div>
<div class="a" style="left:136.2px;top:362px;width:44.6px;height:12.500px;border:0.500px solid #363636;box-sizing:border-box;border-radius:1px;background:#323232"></div>
<div class="t" style="left:161.8px;top:366.200px;width:0;display:flex;justify-content:center;font-size:43px;color:#4a4a4a"><span>Alembic</span></div>
<div class="a" style="left:181.4px;top:362px;width:44.6px;height:12.500px;border:0.500px solid #363636;box-sizing:border-box;border-radius:1px;background:#323232"></div>
<div class="t" style="left:207.0px;top:366.200px;width:0;display:flex;justify-content:center;font-size:43px;color:#4a4a4a"><span>Megascans</span></div>
<div class="a" style="left:226.6px;top:362px;width:44.6px;height:12.500px;border:0.500px solid #363636;box-sizing:border-box;border-radius:1px;background:#323232"></div>
<div class="t" style="left:249.2px;top:366.200px;width:0;display:flex;justify-content:center;font-size:43px;color:#4a4a4a"><span>Textures</span></div>
<div class="a" style="left:271.8px;top:362px;width:44.6px;height:12.500px;border:0.500px solid #363636;box-sizing:border-box;border-radius:1px;background:#323232"></div>
<div class="t" style="left:294.4px;top:366.200px;width:0;display:flex;justify-content:center;font-size:43px;color:#4a4a4a"><span>Shader</span></div>
<div class="a" style="left:317.0px;top:362px;width:44.6px;height:12.500px;border:0.500px solid #363636;box-sizing:border-box;border-radius:1px;background:#323232"></div>
<div class="t" style="left:339.6px;top:366.200px;width:0;display:flex;justify-content:center;font-size:43px;color:#4a4a4a"><span>Models</span></div>
<div class="a" style="left:362.2px;top:362px;width:44.6px;height:12.500px;border:0.500px solid #363636;box-sizing:border-box;border-radius:1px;background:#323232"></div>
<div class="t" style="left:384.8px;top:366.200px;width:0;display:flex;justify-content:center;font-size:43px;color:#1f5a1f"><span>USD</span></div>
<div class="a" style="left:407.4px;top:362px;width:44.6px;height:12.500px;border:0.500px solid #363636;box-sizing:border-box;border-radius:1px;background:#323232"></div>
<div class="t" style="left:430.0px;top:366.200px;width:0;display:flex;justify-content:center;font-size:43px;color:#4a4a4a"><span>Preferences</span></div>
<div class="a" style="left:452.6px;top:362px;width:44.6px;height:12.500px;border:0.500px solid #363636;box-sizing:border-box;border-radius:1px;background:#323232"></div>
<div class="t" style="left:475.2px;top:366.200px;width:0;display:flex;justify-content:center;font-size:43px;color:#4a4a4a"><span>Help</span></div>
<svg style="left:139.400px;top:365px" width="6.600" height="6.600" viewBox="0 0 13 13"><circle cx="6.500" cy="6.500" r="5.500" fill="none" stroke="#8a8a8a" stroke-width="1"/><path d="M6.500 3c-2 2.500-2 5 0 6.500 2-1.500 2-4 0-6.500z" fill="none" stroke="#8a8a8a" stroke-width="0.900"/></svg>
<svg style="left:185px;top:365.400px" width="5.400" height="5" viewBox="0 0 11 10"><path d="M0.500 0.500h10v9h-3V5a2 2 0 0 0-4 0v4.500h-3z" fill="#e0e0e0"/></svg>
<div class="a" style="left:408.300px;top:361.600px;width:1.200px;height:1px;background:#1f6a1f"></div>
<div class="a" style="left:9px;top:385px;width:34px;height:8px;border:0.500px solid #3a3a3a;box-sizing:border-box;border-radius:1px;background:#333"></div>
<div class="t" style="left:12.200px;top:387px;font-size:43px;color:#c0c0c0">Tags</div>
<svg style="left:38.600px;top:388.300px" width="2.200" height="1.600" viewBox="0 0 10 7"><path d="M0 0h10L5 7z" fill="#bbb"/></svg>
<div class="a" style="left:44.500px;top:385px;width:432px;height:8px;border:0.500px solid #3a3a3a;box-sizing:border-box;border-radius:1px;background:#333"></div>
<div class="t" style="left:46.600px;top:387px;font-size:43px;color:#5c5c5c">Search...</div>
<svg style="left:480.400px;top:387px" width="3.600" height="3" viewBox="0 0 8 7"><path d="M0 7L8 0v4L4 7z" fill="#c8ccd4"/></svg>
<div class="a" style="left:8.500px;top:395.200px;width:478px;height:260.500px;border:0.700px solid #1c421c;box-sizing:border-box;border-radius:1.500px"></div>
<div class="a" style="left:490px;top:381.400px;width:3.200px;height:302px;background:#4b4b4b"></div>
<div class="a" style="left:8.500px;top:657.600px;width:478px;height:16.400px;border:0.500px solid #3a3a3a;box-sizing:border-box;border-radius:1px;background:#333"></div>
<div class="t" style="left:242.600px;top:664px;font-size:43px;color:#909090">Scan</div>
<div class="a" style="left:6px;top:679.200px;width:483px;height:0.500px;background:#3a3a3a"></div>
<svg style="left:26px;top:396.500px" width="13" height="32" viewBox="0 0 26 64"><path d="M6 3l4-2 4 1 1 5 3 3 1 7-1 5 2 6 1 9 2 8-1 6-4 3-10 1-3-3 1-6-2-8 1-9-2-7 0-8 2-6z" fill="#55554f"/><path d="M8 4l3 4-2 5 2 6M13 9l3 6-2 8 3 7M6 18l2 8-1 8M12 24l-2 8 3 8M16 30l2 8" stroke="#8c8c86" stroke-width="1.800" fill="none" opacity="0.850"/><path d="M7 10l2 6M11 14l1 8M14 34l2 10 1 8M9 36l1 10" stroke="#26221f" stroke-width="1.800" fill="none" opacity="0.900"/><path d="M10 44l4 4-2 5 4 4M7 48l3 4" stroke="#4a1812" stroke-width="2.200" fill="none"/><path d="M18 22l1 10M20 42l1 8" stroke="#5e8a4c" stroke-width="0.900" fill="none"/><path d="M5 60.500l9 1.500 7-2.500" stroke="#d4d4d4" stroke-width="2" fill="none"/></svg>
<svg style="left:14.600px;top:419.600px" width="6.400" height="6.600" viewBox="0 0 13 13"><path d="M1 3l5-2 6 2v7l-5 2-6-2z" fill="#28a8e0"/><path d="M3 4l3 5 3-6" stroke="#9adcf8" stroke-width="1.400" fill="none"/></svg>
<svg style="left:22.600px;top:419.600px" width="5.800" height="6.600" viewBox="0 0 12 13"><path d="M6 0.500l5 2.500v7l-5 2.500L1 10V3z" fill="#e88420"/><circle cx="6" cy="6.500" r="2.800" fill="#c81810"/><path d="M5 5l3 1.500" stroke="#f0c0a0" stroke-width="1"/></svg>
<div class="a" style="left:11.500px;top:430.300px;width:39px;height:6.400px;background:#222;border-radius:1.200px"></div>
<div class="t" style="left:13.200px;top:431.600px;font-size:40px;font-weight:bold;color:#cfcfcf;width:365px;overflow:hidden">Aphrodite_Milos_Rusti</div>
<div class="a" style="left:504.300px;top:333.500px;width:1.200px;height:1.200px;background:#777"></div>
<div class="a" style="left:504.300px;top:355.500px;width:1.200px;height:1.200px;background:#777"></div>
<div class="a" style="left:504.500px;top:341px;width:1px;height:7.500px;background:repeating-linear-gradient(#5a5a5a 0 1px,transparent 1px 2.100px)"></div>
<div class="a" style="left:502px;top:492.200px;width:1.200px;height:2.400px;background:#9aa0a8"></div>
<div class="a" style="left:502px;top:514.200px;width:1.200px;height:2.400px;background:#9aa0a8"></div>
<div class="a" style="left:501px;top:501px;width:3.500px;height:6px;background:repeating-linear-gradient(#4c4c4c 0 0.800px,transparent 0.800px 2.200px)"></div>
<!-- ===== RIGHT PANE ===== -->
<div class="a" style="left:506px;top:0;width:519px;height:687px;background:#303030"></div>
<div class="a" style="left:506px;top:0;width:519px;height:5.500px;background:#2d2d2d"></div>
<div class="a" style="left:506.500px;top:0;width:20px;height:5.800px;background:#3c3c3c"></div>
<div class="a" style="left:506px;top:5.500px;width:519px;height:13px;background:linear-gradient(#474747,#3c3c3c 35%,#3b3b3b)"></div>
<div class="a" style="left:525px;top:8.200px;width:483px;height:7.400px;background:#393939;border-radius:1px;box-shadow:0 1.200px 0 #232323,0 -0.600px 0 #2c2c2c,-0.600px 0 0 #2c2c2c,0.600px 0 0 #2c2c2c"></div>
<div class="a" style="left:506px;top:17.200px;width:519px;height:1.800px;background:#3e3e3e"></div>
<div class="a" style="left:506px;top:19px;width:519px;height:8px;background:#2d2d2d"></div>
<div class="a" style="left:506px;top:27px;width:519px;height:0.800px;background:#222"></div>
<div class="t" style="left:508.200px;top:1.200px;font-size:35px;color:#8e9aac;font-style:italic">/stage</div>
<div class="t" style="left:523.300px;top:1.100px;font-size:36px;color:#aaa">×</div>
<svg style="left:531.300px;top:1.200px" width="3.400" height="3.400" viewBox="0 0 10 10"><path d="M5 0v10M0 5h10" stroke="#ccc" stroke-width="3"/><circle cx="5" cy="5" r="3.200" fill="#ccc"/></svg>
<div class="a" style="left:1015.400px;top:2px;width:3.200px;height:2.400px;background:#ddd"></div>
<svg style="left:1021px;top:2.500px" width="2.600" height="1.800" viewBox="0 0 10 7"><path d="M0 0h10L5 7z" fill="#ccc"/></svg>
<svg style="left:507.800px;top:9.800px" width="5" height="5" viewBox="0 0 10 10"><path d="M10 3H5V0L0 4.500 5 9V6h5z" fill="#ddd"/><path d="M6 8l3 0-1.500 2z" fill="#bbb"/></svg>
<svg style="left:516.500px;top:10px" width="4.500" height="4.500" viewBox="0 0 10 10"><path d="M0 4h5V1l5 4-5 4V6H0z" fill="#666"/></svg>
<svg style="left:527.200px;top:9.800px" width="6.200" height="5.600" viewBox="0 0 12 11"><path d="M1 5l2-3h6l2 3v5H1z" fill="#e08a1c"/><path d="M3.500 5.500l2.500 2 2.500-2z" fill="#f6c060"/><circle cx="6.300" cy="2.600" r="1.600" fill="#b8c0d0"/><circle cx="6.300" cy="1.600" r="0.900" fill="#c03020"/></svg>
<div class="t" style="left:535.300px;top:10.600px;font-size:38.5px;color:#aaa">stage</div>
<svg style="left:1003px;top:10.800px" width="2.400" height="1.800" viewBox="0 0 10 7"><path d="M0 0h10L5 7z" fill="#999"/></svg>
<svg style="left:1011px;top:9.500px" width="6" height="5" viewBox="0 0 12 10"><path d="M0 5h5M5 2.500l4 1v3l-4 1zM9 4h3v2H9z" stroke="#b4b4b4" stroke-width="1.100" fill="#b4b4b4"/></svg>
<svg style="left:1019.500px;top:9.200px" width="6" height="6" viewBox="0 0 12 12"><circle cx="6" cy="6" r="5.200" fill="#323d58" stroke="#4c5c82" stroke-width="1"/><circle cx="6.300" cy="5.500" r="1.600" fill="#5468a0"/></svg>
<svg style="left:506.800px;top:19.400px" width="1.600" height="1.600" viewBox="0 0 4 4"><path d="M0 0h4L0 4z" fill="#111"/></svg>
<div class="t" style="left:512.7px;top:20.700px;font-size:40.5px;color:#c0c0c0">Add</div>
<div class="t" style="left:525.0px;top:20.700px;font-size:40.5px;color:#c0c0c0">Edit</div>
<div class="t" style="left:538.0px;top:20.700px;font-size:40.5px;color:#c0c0c0">Go</div>
<div class="t" style="left:548.5px;top:20.700px;font-size:40.5px;color:#c0c0c0">View</div>
<div class="t" style="left:563.0px;top:20.700px;font-size:40.5px;color:#c0c0c0">Tools</div>
<div class="t" style="left:578.0px;top:20.700px;font-size:40.5px;color:#c0c0c0">Layout</div>
<div class="t" style="left:596.0px;top:20.700px;font-size:40.5px;color:#c0c0c0">qLib</div>
<div class="t" style="left:607.5px;top:20.700px;font-size:40.5px;color:#c0c0c0">Labs</div>
<div class="t" style="left:621.0px;top:20.700px;font-size:40.5px;color:#c0c0c0">Help</div>
<svg style="left:916.1px;top:19.6px" width="6.4" height="6.4" viewBox="0 0 13 13"><path d="M2 2l9 9M11 2L2 11" stroke="#e0e0e0" stroke-width="2"/><circle cx="2.500" cy="2.500" r="2" fill="#e0e0e0"/><circle cx="10.500" cy="2.500" r="1.600" fill="#e0e0e0"/></svg>
<svg style="left:924.8px;top:19.6px" width="6.4" height="6.4" viewBox="0 0 13 13"><rect x="3" y="1" width="2.500" height="11" fill="#c8c8c8"/><rect x="7" y="5" width="2.500" height="7" fill="#c8c8c8"/><rect x="10" y="8" width="2" height="4" fill="#999"/></svg>
<svg style="left:933.4px;top:19.6px" width="6.4" height="6.4" viewBox="0 0 13 13"><rect x="2" y="2" width="9" height="9" fill="#e8e8e8"/><path d="M2 5h9M2 8h9" stroke="#aaa" stroke-width="0.800"/></svg>
<div class="a" style="left:947.400px;top:19.300px;width:7.400px;height:7.400px;background:#7890a8"></div>
<svg style="left:947.8px;top:19.6px" width="6.4" height="6.4" viewBox="0 0 13 13"><rect x="2" y="2" width="4" height="4" fill="#f0f0f0"/><rect x="7" y="2" width="4" height="4" fill="#e8a030"/><rect x="2" y="7" width="4" height="4" fill="#3858c0"/><rect x="7" y="7" width="4" height="4" fill="#f0f0f0"/></svg>
<svg style="left:956.8px;top:19.6px" width="6.4" height="6.4" viewBox="0 0 13 13"><path d="M2 5V2h3M8 2h3v3M11 8v3H8M5 11H2V8" fill="none" stroke="#e0e0e0" stroke-width="1.600"/></svg>
<svg style="left:970.4px;top:19.6px" width="6.4" height="6.4" viewBox="0 0 13 13"><rect x="2" y="2" width="9" height="9" fill="#d8d8d8"/><path d="M4 9l5-5M6 4h3v3" stroke="#333" stroke-width="1.400" fill="none"/></svg>
<svg style="left:979.1px;top:19.6px" width="6.4" height="6.4" viewBox="0 0 13 13"><rect x="1.500" y="2" width="10" height="8" fill="#f0c040"/><path d="M3 4.500h7M3 6.500h5" stroke="#7a5a10" stroke-width="1"/><path d="M8 10l3-3v3z" fill="#c89020"/></svg>
<svg style="left:987.8px;top:19.6px" width="6.4" height="6.4" viewBox="0 0 13 13"><rect x="1.500" y="1.500" width="10" height="10" fill="#48a0d8"/><path d="M3 9l3-4 2 2 3-4" stroke="#f0f0f0" stroke-width="1.200" fill="none"/><rect x="8" y="7" width="3" height="3" fill="#e8c040"/></svg>
<svg style="left:996.3px;top:19.6px" width="6.4" height="6.4" viewBox="0 0 13 13"><ellipse cx="6.500" cy="6.500" rx="5" ry="4" fill="#e89020"/><path d="M2 6h9M2 8h9" stroke="#b86810" stroke-width="0.800"/></svg>
<svg style="left:1010.5px;top:19.6px" width="6.4" height="6.4" viewBox="0 0 13 13"><circle cx="5.500" cy="5.500" r="3.600" fill="#555" stroke="#e0e0e0" stroke-width="1.400"/><path d="M8 8l4 4" stroke="#e0e0e0" stroke-width="1.800"/></svg>
<svg style="left:1019.3px;top:19.6px" width="6.4" height="6.4" viewBox="0 0 13 13"><rect x="1" y="2" width="11" height="9" fill="#e8e8e8"/><path d="M4 5h5l-2.500 3.500z" fill="#222"/></svg>
<div class="t" style="left:995.400px;top:33.800px;font-size:86px;font-weight:bold;color:#454545">Solaris</div>

<svg style="left:0;top:0" width="1025" height="687" viewBox="0 0 1025 687">
<ellipse cx="650.400" cy="278.700" rx="19.600" ry="15.800" fill="#2b2b3a"/>
<circle cx="650.400" cy="278.700" r="12.300" fill="none" stroke="#3d62c4" stroke-width="4.600"/>
<circle cx="650.400" cy="278.700" r="10" fill="#2a2c3a"/>
<circle cx="644.300" cy="271.400" r="1" fill="#d8d8d8"/><circle cx="656.500" cy="271.400" r="1" fill="#d8d8d8"/><circle cx="650.400" cy="286.200" r="1" fill="#d8d8d8"/>
<rect x="634.600" y="273.400" width="31.200" height="10.400" rx="1.500" fill="#c9c9c9" stroke="#d08428" stroke-width="0.900"/>
<rect x="661.800" y="274.200" width="3.400" height="8.800" fill="#28a0e0"/>
<path d="M637 275.400v6.400M639.500 275.400v6.400M642.500 275.400v6.400M645 275.400v6.400M657 275.400v6.400M659.500 275.400v6.400" stroke="#f4f4f4" stroke-width="1.300"/>
<path d="M637 283h26" stroke="#3060d0" stroke-width="0.500" opacity="0.600"/>
<path d="M648.200 278.600l3-2.600v1.500h2.200v2.200h-2.200v1.500z" fill="#e89028"/>
<rect x="652.400" y="279.200" width="2" height="2" fill="none" stroke="#f0c040" stroke-width="0.500"/>
<rect x="670.700" y="285.200" width="2.600" height="2.200" fill="#8a8a8a"/><path d="M671.300 285.200v-0.800a0.700 0.700 0 0 1 1.400 0V285.200" stroke="#8a8a8a" stroke-width="0.400" fill="none"/>
</svg>
<svg style="left:0;top:0" width="1025" height="687" viewBox="0 0 1025 687"><path d="M542.8 29.3h1.6M543.6 28.5v1.6M542.8 89.1h1.6M543.6 88.3v1.6M542.8 148.9h1.6M543.6 148.1v1.6M542.8 208.7h1.6M543.6 207.9v1.6M542.8 268.5h1.6M543.6 267.7v1.6M542.8 328.3h1.6M543.6 327.5v1.6M542.8 388.1h1.6M543.6 387.3v1.6M542.8 447.9h1.6M543.6 447.1v1.6M542.8 507.7h1.6M543.6 506.9v1.6M542.8 567.5h1.6M543.6 566.7v1.6M542.8 627.3h1.6M543.6 626.5v1.6M602.7 29.3h1.6M603.5 28.5v1.6M602.7 89.1h1.6M603.5 88.3v1.6M602.7 148.9h1.6M603.5 148.1v1.6M602.7 208.7h1.6M603.5 207.9v1.6M602.7 268.5h1.6M603.5 267.7v1.6M602.7 328.3h1.6M603.5 327.5v1.6M602.7 388.1h1.6M603.5 387.3v1.6M602.7 447.9h1.6M603.5 447.1v1.6M602.7 507.7h1.6M603.5 506.9v1.6M602.7 567.5h1.6M603.5 566.7v1.6M602.7 627.3h1.6M603.5 626.5v1.6M662.5 29.3h1.6M663.3 28.5v1.6M662.5 89.1h1.6M663.3 88.3v1.6M662.5 148.9h1.6M663.3 148.1v1.6M662.5 208.7h1.6M663.3 207.9v1.6M662.5 268.5h1.6M663.3 267.7v1.6M662.5 328.3h1.6M663.3 327.5v1.6M662.5 388.1h1.6M663.3 387.3v1.6M662.5 447.9h1.6M663.3 447.1v1.6M662.5 507.7h1.6M663.3 506.9v1.6M662.5 567.5h1.6M663.3 566.7v1.6M662.5 627.3h1.6M663.3 626.5v1.6M722.4 29.3h1.6M723.2 28.5v1.6M722.4 89.1h1.6M723.2 88.3v1.6M722.4 148.9h1.6M723.2 148.1v1.6M722.4 208.7h1.6M723.2 207.9v1.6M722.4 268.5h1.6M723.2 267.7v1.6M722.4 328.3h1.6M723.2 327.5v1.6M722.4 388.1h1.6M723.2 387.3v1.6M722.4 447.9h1.6M723.2 447.1v1.6M722.4 507.7h1.6M723.2 506.9v1.6M722.4 567.5h1.6M723.2 566.7v1.6M722.4 627.3h1.6M723.2 626.5v1.6M782.2 29.3h1.6M783.0 28.5v1.6M782.2 89.1h1.6M783.0 88.3v1.6M782.2 148.9h1.6M783.0 148.1v1.6M782.2 208.7h1.6M783.0 207.9v1.6M782.2 268.5h1.6M783.0 267.7v1.6M782.2 328.3h1.6M783.0 327.5v1.6M782.2 388.1h1.6M783.0 387.3v1.6M782.2 447.9h1.6M783.0 447.1v1.6M782.2 507.7h1.6M783.0 506.9v1.6M782.2 567.5h1.6M783.0 566.7v1.6M782.2 627.3h1.6M783.0 626.5v1.6M842.1 29.3h1.6M842.9 28.5v1.6M842.1 89.1h1.6M842.9 88.3v1.6M842.1 148.9h1.6M842.9 148.1v1.6M842.1 208.7h1.6M842.9 207.9v1.6M842.1 268.5h1.6M842.9 267.7v1.6M842.1 328.3h1.6M842.9 327.5v1.6M842.1 388.1h1.6M842.9 387.3v1.6M842.1 447.9h1.6M842.9 447.1v1.6M842.1 507.7h1.6M842.9 506.9v1.6M842.1 567.5h1.6M842.9 566.7v1.6M842.1 627.3h1.6M842.9 626.5v1.6M901.9 29.3h1.6M902.7 28.5v1.6M901.9 89.1h1.6M902.7 88.3v1.6M901.9 148.9h1.6M902.7 148.1v1.6M901.9 208.7h1.6M902.7 207.9v1.6M901.9 268.5h1.6M902.7 267.7v1.6M901.9 328.3h1.6M902.7 327.5v1.6M901.9 388.1h1.6M902.7 387.3v1.6M901.9 447.9h1.6M902.7 447.1v1.6M901.9 507.7h1.6M902.7 506.9v1.6M901.9 567.5h1.6M902.7 566.7v1.6M901.9 627.3h1.6M902.7 626.5v1.6M961.8 29.3h1.6M962.5 28.5v1.6M961.8 89.1h1.6M962.5 88.3v1.6M961.8 148.9h1.6M962.5 148.1v1.6M961.8 208.7h1.6M962.5 207.9v1.6M961.8 268.5h1.6M962.5 267.7v1.6M961.8 328.3h1.6M962.5 327.5v1.6M961.8 388.1h1.6M962.5 387.3v1.6M961.8 447.9h1.6M962.5 447.1v1.6M961.8 507.7h1.6M962.5 506.9v1.6M961.8 567.5h1.6M962.5 566.7v1.6M961.8 627.3h1.6M962.5 626.5v1.6M1021.6 29.3h1.6M1022.4 28.5v1.6M1021.6 89.1h1.6M1022.4 88.3v1.6M1021.6 148.9h1.6M1022.4 148.1v1.6M1021.6 208.7h1.6M1022.4 207.9v1.6M1021.6 268.5h1.6M1022.4 267.7v1.6M1021.6 328.3h1.6M1022.4 327.5v1.6M1021.6 388.1h1.6M1022.4 387.3v1.6M1021.6 447.9h1.6M1022.4 447.1v1.6M1021.6 507.7h1.6M1022.4 506.9v1.6M1021.6 567.5h1.6M1022.4 566.7v1.6M1021.6 627.3h1.6M1022.4 626.5v1.6" stroke="#4c4c4c" stroke-width="0.700" fill="none"/></svg>
<div class="t" style="left:668.600px;top:269.200px;font-size:53px;color:#666">Asset Reference</div>
<div class="t" style="left:668.600px;top:274.800px;font-size:66.5px;color:#d4d4d4">rubbertoy</div>
<div class="t" style="left:668.300px;top:288.800px;font-size:66.5px;color:#a4a4a4">/rubbertoy</div>
<div class="a" style="left:973.500px;top:636.500px;width:52px;height:51px;background:#2a2a2a"></div>
<div class="a" style="left:974.0px;top:637.0px;width:16.9px;height:7.7px;background:#8b1a10"></div>
<div class="a" style="left:991.8px;top:637.0px;width:7.6px;height:7.7px;background:#bf7d45"></div>
<div class="a" style="left:1000.0px;top:637.0px;width:8.4px;height:7.7px;background:#ded6b8"></div>
<div class="a" style="left:1009.0px;top:637.0px;width:8.2px;height:7.7px;background:#a090a8"></div>
<div class="a" style="left:1017.8px;top:637.0px;width:8.2px;height:7.7px;background:#7d5f50"></div>
<div class="a" style="left:974.0px;top:645.3px;width:8.2px;height:8.1px;background:#a06a40"></div>
<div class="a" style="left:982.8px;top:645.3px;width:8.4px;height:8.1px;background:#bf7d45"></div>
<div class="a" style="left:991.8px;top:645.3px;width:7.6px;height:8.1px;background:#e0b850"></div>
<div class="a" style="left:1000.0px;top:645.3px;width:8.4px;height:8.1px;background:#ded6b8"></div>
<div class="a" style="left:1009.0px;top:645.3px;width:8.2px;height:8.1px;background:#dcb450"></div>
<div class="a" style="left:1017.8px;top:645.3px;width:8.2px;height:8.1px;background:#dcb450"></div>
<div class="a" style="left:974.0px;top:654.0px;width:8.2px;height:7.8px;background:#4a5840"></div>
<div class="a" style="left:982.8px;top:654.0px;width:8.4px;height:7.8px;background:#d0a040"></div>
<div class="a" style="left:991.8px;top:654.0px;width:7.6px;height:7.8px;background:#ddd5b5"></div>
<div class="a" style="left:1000.0px;top:654.0px;width:8.4px;height:7.8px;background:#bcc8c8"></div>
<div class="a" style="left:1009.0px;top:654.0px;width:8.2px;height:7.8px;background:#3d8898"></div>
<div class="a" style="left:1017.8px;top:654.0px;width:8.2px;height:7.8px;background:#2a7878"></div>
<div class="a" style="left:974.0px;top:662.4px;width:8.2px;height:8.0px;background:#1450b0"></div>
<div class="a" style="left:982.8px;top:662.4px;width:8.4px;height:8.0px;background:#4898b8"></div>
<div class="a" style="left:991.8px;top:662.4px;width:7.6px;height:8.0px;background:#c8d0d0"></div>
<div class="a" style="left:1000.0px;top:662.4px;width:8.4px;height:8.0px;background:#c0cccc"></div>
<div class="a" style="left:1009.0px;top:662.4px;width:8.2px;height:8.0px;background:#8898a0"></div>
<div class="a" style="left:1017.8px;top:662.4px;width:8.2px;height:8.0px;background:#586888"></div>
<div class="a" style="left:974.0px;top:671.0px;width:8.2px;height:8.0px;background:#506098"></div>
<div class="a" style="left:982.8px;top:671.0px;width:8.4px;height:8.0px;background:#7080b8"></div>
<div class="a" style="left:991.8px;top:671.0px;width:7.6px;height:8.0px;background:#7080b8"></div>
<div class="a" style="left:1000.0px;top:671.0px;width:8.4px;height:8.0px;background:#c8c4c8"></div>
<div class="a" style="left:1009.0px;top:671.0px;width:8.2px;height:8.0px;background:#707878"></div>
<div class="a" style="left:1017.8px;top:671.0px;width:8.2px;height:8.0px;background:#686060"></div>
<div class="a" style="left:974.0px;top:679.6px;width:8.2px;height:8.0px;background:#181818"></div>
<div class="a" style="left:982.8px;top:679.6px;width:8.4px;height:8.0px;background:#505050"></div>
<div class="a" style="left:991.8px;top:679.6px;width:7.6px;height:8.0px;background:#707878"></div>
<div class="a" style="left:1000.0px;top:679.6px;width:8.4px;height:8.0px;background:#a090a8"></div>
<div class="a" style="left:1009.0px;top:679.6px;width:8.2px;height:8.0px;background:#d0d4d8"></div>
<div class="a" style="left:1017.8px;top:679.6px;width:8.2px;height:8.0px;background:#c8ccd0"></div>

</body></html>
